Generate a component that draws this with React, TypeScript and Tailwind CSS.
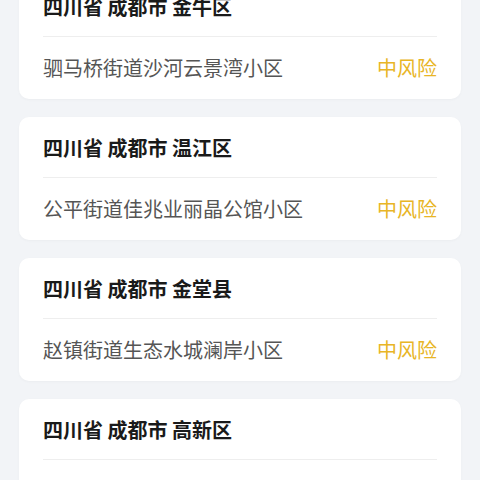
import React from 'react';

type Item = { region: string; place?: string; level?: string };

const items: Item[] = [
  { region: '四川省 成都市 金牛区', place: '驷马桥街道沙河云景湾小区', level: '中风险' },
  { region: '四川省 成都市 温江区', place: '公平街道佳兆业丽晶公馆小区', level: '中风险' },
  { region: '四川省 成都市 金堂县', place: '赵镇街道生态水城澜岸小区', level: '中风险' },
  // last card is cut by the window, its second row is not visible
  { region: '四川省 成都市 高新区' },
];

const App: React.FC = () => {
  return (
    <div
      className="w-[480px] h-[480px] overflow-hidden bg-[#f2f4f7]"
      style={{ fontFamily: '"Noto Sans CJK SC", "Noto Sans", sans-serif' }}
    >
      <div className="flex flex-col gap-[18px] px-[19px] -mt-[24px]">
        {items.map((item, i) => (
          <div key={i} className="bg-white rounded-[10px] px-6 shadow-[0_1px_3px_rgba(0,0,0,0.03)]">
            <div className="h-[61px] flex items-center pt-[2px] border-b border-[#eeeeee]">
              <span className="text-[20px] font-bold text-[#1a1a1a] leading-none">{item.region}</span>
            </div>
            <div className="h-[62px] flex items-center justify-between">
              {item.place && <span className="text-[20px] text-[#555555] leading-none">{item.place}</span>}
              {item.level && <span className="text-[20px] text-[#e8b526] leading-none">{item.level}</span>}
            </div>
          </div>
        ))}
      </div>
    </div>
  );
};

export default App;
